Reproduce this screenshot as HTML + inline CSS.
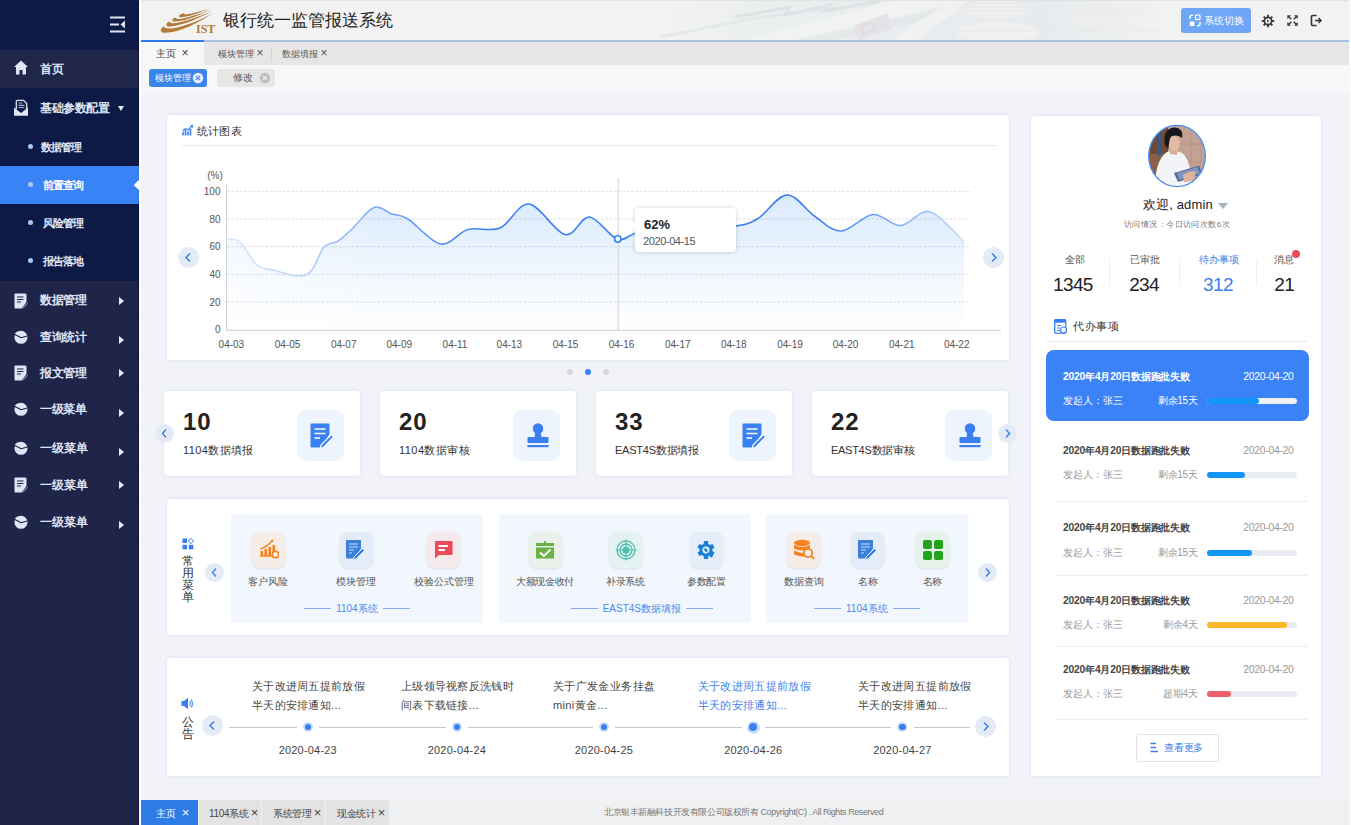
<!DOCTYPE html>
<html><head><meta charset="utf-8">
<style>
*{margin:0;padding:0;box-sizing:border-box}
html,body{width:1351px;height:825px;overflow:hidden;background:#f2f3f8;font-family:"Liberation Sans",sans-serif;color:#333}
.a{position:absolute}
#root{position:relative;width:1351px;height:825px;overflow:hidden;background:#f2f3f8}
/* sidebar */
#side{left:0;top:0;width:139px;height:825px;background:#1f2549}
.si{left:0;width:139px;color:#dfe6f7;font-size:11.5px;font-weight:bold;line-height:16px;white-space:nowrap}
.si .t{position:absolute;left:40px}
.sub .t{left:41px}
.sub .dot{position:absolute;left:28px;width:5px;height:5px;border-radius:50%;background:#a9c8f5}
.sep{left:0;width:139px;height:1px;background:#1a2043}
.arr{position:absolute;left:119px;width:0;height:0;border-top:4px solid transparent;border-bottom:4px solid transparent;border-left:5px solid #e6ecf8}
/* header */
#hdr{left:139px;top:0;width:1212px;height:41px;background:#f2f2f2}
.card{background:#fff;border-radius:4px;box-shadow:0 0 3px 1px rgba(200,215,245,.45)}
.ylab{font-size:10px;color:#555;text-align:right;width:30px;line-height:12px}
.xlab{font-size:10px;color:#555;text-align:center;width:40px;line-height:12px}
.gl .ln{display:inline-block;width:27px;height:1px;background:#80abf3;vertical-align:middle;margin:0 5px 2px}
</style></head><body><div id="root">

<!-- SIDEBAR -->
<div id="side" class="a">
  <div class="a" style="left:0;top:0;width:139px;height:50px;background:#0c1a45"></div>
  <!-- hamburger -->
  <svg class="a" style="left:108px;top:14px" width="20" height="20" viewBox="0 0 20 20">
    <rect x="2" y="2.5" width="15" height="2" fill="#dfe3ee"></rect>
    <rect x="2" y="9.5" width="9" height="2" fill="#dfe3ee"></rect>
    <path d="M17 6.5 L12.5 10.5 L17 14.5 Z" fill="#dfe3ee"></path>
    <rect x="2" y="16.5" width="15" height="2" fill="#dfe3ee"></rect>
  </svg>
  <!-- home -->
  <div class="a" style="left:0;top:50px;width:139px;height:38px;background:#20274b"></div>
  <svg class="a" style="left:14px;top:60px" width="14" height="15" viewBox="0 0 14 15">
    <path d="M7 0.5 L0 7 L2 7 L2 14.5 L5.5 14.5 L5.5 10 L8.5 10 L8.5 14.5 L12 14.5 L12 7 L14 7 Z" fill="#dfe6f7"></path>
  </svg>
  <div class="si a" style="top:61px"><span class="t" style="font-size: 12px; letter-spacing: -0.4px;">首页</span></div>
  <!-- submenu region -->
  <div class="a" style="left:0;top:88px;width:139px;height:193px;background:#0c1a45"></div>
  <svg class="a" style="left:13px;top:99px" width="16" height="18" viewBox="0 0 16 18">
    <path d="M3.3 10 V2.5 Q3.3 1.3 4.5 1.3 H10.5 L13.7 4.5 V10" fill="none" stroke="#dfe6f7" stroke-width="1.3"/>
    <path d="M5.5 4 H9.5 M5.5 6.3 H11.5 M5.5 8.5 H11.5" stroke="#a9b4d6" stroke-width="1.2"/>
    <path d="M1 8.5 L8 14 L15 8.5 V16.8 H1 Z" fill="#dfe6f7"/>
  </svg>
  <div class="si a" style="top:100px"><span class="t" style="font-size: 12px; letter-spacing: -0.44px;">基础参数配置</span></div>
  <div class="a" style="left:118px;top:106px;width:0;height:0;border-left:3.5px solid transparent;border-right:3.5px solid transparent;border-top:5px solid #e6ecf8"></div>
  <div class="si sub a" style="top:139px"><span class="dot" style="top:5px"></span><span class="t" style="font-size: 11px; letter-spacing: -0.87px;">数据管理</span></div>
  <div class="a" style="left:0;top:165.5px;width:139px;height:38.5px;background:#3884f6"></div>
  <div class="a" style="left:134px;top:179.5px;width:0;height:0;border-top:5px solid transparent;border-bottom:5px solid transparent;border-right:5px solid #fff"></div>
  <div class="si sub a" style="top:177px;color:#fff"><span class="dot" style="top:5px"></span><span class="t" style="left: 43px; font-size: 11px; letter-spacing: -1.1px;">前置查询</span></div>
  <div class="sep a" style="top:204px;background:#0c1840"></div>
  <div class="si sub a" style="top:215px"><span class="dot" style="top:5px"></span><span class="t" style="left: 43px; font-size: 11px; letter-spacing: -1.1px;">风险管理</span></div>
  <div class="sep a" style="top:242px;background:#13204c"></div>
  <div class="si sub a" style="top:253px"><span class="dot" style="top:5px"></span><span class="t" style="left: 43px; font-size: 11px; letter-spacing: -1.1px;">报告落地</span></div>
  <!-- lower items -->
  <div class="sep a" style="top:318px"></div>
  <div class="sep a" style="top:353px"></div>
  <div class="sep a" style="top:390px"></div>
  <div class="sep a" style="top:428px"></div>
  <div class="sep a" style="top:465px"></div>
  <div class="sep a" style="top:501px"></div>
  <div class="sep a" style="top:537px"></div>
  <div class="si a" style="top:292px"><span class="t" style="font-size: 12px; letter-spacing: -0.43px;">数据管理</span></div>
  <div class="si a" style="top:329px"><span class="t" style="font-size: 12px; letter-spacing: -0.43px;">查询统计</span></div>
  <div class="si a" style="top:365px"><span class="t" style="font-size: 12px; letter-spacing: -0.43px;">报文管理</span></div>
  <div class="si a" style="top:401px"><span class="t" style="font-size: 12px; letter-spacing: -0.43px;">一级菜单</span></div>
  <div class="si a" style="top:440px"><span class="t">一级菜单</span></div>
  <div class="si a" style="top:477px"><span class="t">一级菜单</span></div>
  <div class="si a" style="top:514px"><span class="t">一级菜单</span></div>
  <div class="arr" style="top:297px"></div>
  <div class="arr" style="top:336px"></div>
  <div class="arr" style="top:369px"></div>
  <div class="arr" style="top:409px"></div>
  <div class="arr" style="top:448px"></div>
  <div class="arr" style="top:481px"></div>
  <div class="arr" style="top:521px"></div>
  <svg class="a" style="left:14px;top:293px" width="14" height="16" viewBox="0 0 14 16"><path d="M1.5 0.5 H11 Q12.5 0.5 12.5 2 V9 L8 15.5 H1.5 Q0.5 15.5 0.5 14.5 V1.5 Q0.5 0.5 1.5 0.5 Z" fill="#dfe6f7"></path><path d="M3 4 H9.5 M3 6.5 H9.5 M3 9 H7" stroke="#1f2549" stroke-width="1.2"></path><path d="M13.5 9.5 L9 14.5 L8 16 L9.5 15.5 L14 10.5 Z" fill="#dfe6f7" stroke="#1f2549" stroke-width="0.8"></path></svg>
<svg class="a" style="left:14px;top:329px" width="14" height="15" viewBox="0 0 14 15"><circle cx="7" cy="8.3" r="6.5" fill="#dfe6f7"/><path d="M7.2 8.8 L0.5 5.3 M7.2 8.8 L14 6.8" stroke="#1f2549" stroke-width="1.1"/><path d="M0.6 4.4 L3.8 2.2 L5.8 6.4 Z" fill="#dfe6f7"/></svg>
<svg class="a" style="left:14px;top:365px" width="14" height="16" viewBox="0 0 14 16"><path d="M1.5 0.5 H11 Q12.5 0.5 12.5 2 V9 L8 15.5 H1.5 Q0.5 15.5 0.5 14.5 V1.5 Q0.5 0.5 1.5 0.5 Z" fill="#dfe6f7"></path><path d="M3 4 H9.5 M3 6.5 H9.5 M3 9 H7" stroke="#1f2549" stroke-width="1.2"></path><path d="M13.5 9.5 L9 14.5 L8 16 L9.5 15.5 L14 10.5 Z" fill="#dfe6f7" stroke="#1f2549" stroke-width="0.8"></path></svg>
<svg class="a" style="left:14px;top:401px" width="14" height="15" viewBox="0 0 14 15"><circle cx="7" cy="8.3" r="6.5" fill="#dfe6f7"/><path d="M7.2 8.8 L0.5 5.3 M7.2 8.8 L14 6.8" stroke="#1f2549" stroke-width="1.1"/><path d="M0.6 4.4 L3.8 2.2 L5.8 6.4 Z" fill="#dfe6f7"/></svg>
<svg class="a" style="left:14px;top:440px" width="14" height="15" viewBox="0 0 14 15"><circle cx="7" cy="8.3" r="6.5" fill="#dfe6f7"/><path d="M7.2 8.8 L0.5 5.3 M7.2 8.8 L14 6.8" stroke="#1f2549" stroke-width="1.1"/><path d="M0.6 4.4 L3.8 2.2 L5.8 6.4 Z" fill="#dfe6f7"/></svg>
<svg class="a" style="left:14px;top:477px" width="14" height="16" viewBox="0 0 14 16"><path d="M1.5 0.5 H11 Q12.5 0.5 12.5 2 V9 L8 15.5 H1.5 Q0.5 15.5 0.5 14.5 V1.5 Q0.5 0.5 1.5 0.5 Z" fill="#dfe6f7"></path><path d="M3 4 H9.5 M3 6.5 H9.5 M3 9 H7" stroke="#1f2549" stroke-width="1.2"></path><path d="M13.5 9.5 L9 14.5 L8 16 L9.5 15.5 L14 10.5 Z" fill="#dfe6f7" stroke="#1f2549" stroke-width="0.8"></path></svg>
<svg class="a" style="left:14px;top:514px" width="14" height="15" viewBox="0 0 14 15"><circle cx="7" cy="8.3" r="6.5" fill="#dfe6f7"/><path d="M7.2 8.8 L0.5 5.3 M7.2 8.8 L14 6.8" stroke="#1f2549" stroke-width="1.1"/><path d="M0.6 4.4 L3.8 2.2 L5.8 6.4 Z" fill="#dfe6f7"/></svg>
</div>

<!-- HEADER -->
<div id="hdr" class="a">
</div>

<div class="a" style="left:139px;top:0;width:1212px;height:1px;background:#e2e2e2"></div>
<!-- faint header watermark -->
<svg class="a" style="left:640px;top:1px" width="540" height="40" viewBox="0 0 540 40">
  <defs>
    <linearGradient id="wmg" x1="0" y1="0" x2="1" y2="0">
      <stop offset="0" stop-color="#f2f2f2" stop-opacity="0"/>
      <stop offset="0.2" stop-color="#e9edee" stop-opacity="0.7"/>
      <stop offset="0.75" stop-color="#e7ebee" stop-opacity="1"/>
      <stop offset="0.92" stop-color="#ecefef" stop-opacity="0.6"/>
      <stop offset="1" stop-color="#f2f2f2" stop-opacity="0"/>
    </linearGradient>
  </defs>
  <rect x="0" y="0" width="540" height="40" fill="url(#wmg)"/>
  <path d="M20 36 L110 18 L150 12 L190 8 L230 4" fill="none" stroke="#e3e8e9" stroke-width="3"/>
  <path d="M95 16 L150 6 L145 14 L190 4 L185 10 L240 0" fill="none" stroke="#dde3e4" stroke-width="3"/>
  <path d="M100 40 L180 40 L320 0 L250 0 Z" fill="#f3f4f4" opacity="0.7"/>
  <path d="M150 40 L260 16 L330 0 L345 0 L270 22 L190 40 Z" fill="#dfe5e6" opacity="0.6"/>
  <rect x="215" y="18" width="36" height="16" rx="2" fill="#e4e4e8" transform="rotate(-20 233 26)"/>
  <rect x="222" y="21" width="12" height="8" fill="none" stroke="#e6d3d6" stroke-width="1" transform="rotate(-20 233 26)"/>
  <path d="M250 40 L310 0 L330 0 L275 40 Z" fill="#f2f3f3" opacity="0.8"/>
  <ellipse cx="356" cy="8" rx="30" ry="10" fill="#efefee"/>
  <path d="M326 2 H386 M326 6 H386 M326 10 H386" stroke="#e5e6e2" stroke-width="0.8"/>
  <ellipse cx="358" cy="31" rx="42" ry="10" fill="#f0f0ef"/>
  <ellipse cx="455" cy="16" rx="28" ry="14" fill="#ebedeb" opacity="0.8"/>
  <path d="M395 0 L380 40 M430 10 L520 10 M300 30 L520 30" stroke="#e2e6e8" stroke-width="0.8" opacity="0.7"/>
</svg>
<!-- logo -->
<svg class="a" style="left:155px;top:5px" width="65" height="33" viewBox="0 0 65 33">
  <g fill="#b47a38">
  <path d="M8.7 21.2 C4.5 24 5 28 10 27.8 C25 27.5 45 17 58.7 7.7 C45 15.5 25 23.5 14 23.5 C11 23.5 9.5 22.5 8.7 21.2 Z"></path>
  <path d="M14 16.4 C10 18.5 10.5 21.8 15 21.5 C28 20.5 45 13 57.3 5.8 C45 11.5 28 17.5 19 18.2 C16.5 18.3 14.8 17.6 14 16.4 Z"></path>
  <path d="M20.2 12.5 C16.5 14 16 16.8 20.5 16.6 C32 16 45 10 55.3 4.6 C45 8.8 32 13.5 24.5 14 C22.5 14.1 20.8 13.5 20.2 12.5 Z"></path>
  <path d="M28.9 8.2 C23.5 9.5 22 12.3 26.5 12.2 C36 11.5 45 7.5 52.9 4.1 C45 6.2 37 9 31 9.5 C30 9.5 29.3 9 28.9 8.2 Z"></path>
  </g>
  <text x="41" y="28.2" font-family="Liberation Serif" font-weight="bold" font-size="12" fill="#b47a38" letter-spacing="0">IST</text>
</svg>
<div class="a" style="left: 223px; top: 11px; font-size: 17px; line-height: 20px; color: rgb(34, 34, 34); white-space: nowrap; letter-spacing: -0.03px;">银行统一监管报送系统</div>
<!-- right buttons -->
<div class="a" style="left:1181px;top:8px;width:70px;height:25px;background:#6fa6f6;border-radius:3px"></div>
<svg class="a" style="left:1189px;top:14px" width="12" height="13" viewBox="0 0 12 13">
  <path d="M1 5 V3 Q1 1.2 3 1.2 H4" fill="none" stroke="#fff" stroke-width="1.4"/>
  <rect x="6.5" y="0.8" width="4.5" height="4.8" rx="1.2" fill="none" stroke="#fff" stroke-width="1.3"/>
  <rect x="0.8" y="7.5" width="4.5" height="4.5" fill="#fff"/>
  <path d="M11 8 V10 Q11 11.8 9 11.8 H8" fill="none" stroke="#fff" stroke-width="1.4"/>
</svg>
<div class="a" style="left: 1204px; top: 14px; font-size: 10px; line-height: 13px; color: rgb(255, 255, 255); white-space: nowrap; letter-spacing: 0px;">系统切换</div>
<svg class="a" style="left:1261px;top:13.5px" width="14" height="14" viewBox="0 0 14 14">
  <path d="M7.00 3.40 L7.00 0.80 M9.55 4.45 L11.38 2.62 M10.60 7.00 L13.20 7.00 M9.55 9.55 L11.38 11.38 M7.00 10.60 L7.00 13.20 M4.45 9.55 L2.62 11.38 M3.40 7.00 L0.80 7.00 M4.45 4.45 L2.62 2.62 " stroke="#3a3a3a" stroke-width="1.9"/>
  <circle cx="7" cy="7" r="3.6" fill="none" stroke="#3a3a3a" stroke-width="1.7"/>
  <path d="M6 5.6 L8.3 7 L6 8.4 Z" fill="#3a3a3a"/>
</svg>
<svg class="a" style="left:1287px;top:15px" width="11" height="11" viewBox="0 0 11 11">
  <path d="M0.3 0.3 H4 L0.3 4 Z M10.7 0.3 H7 L10.7 4 Z M0.3 10.7 H4 L0.3 7 Z M10.7 10.7 H7 L10.7 7 Z" fill="#3a3a3a"/>
  <path d="M1.5 1.5 L4.3 4.3 M9.5 1.5 L6.7 4.3 M1.5 9.5 L4.3 6.7 M9.5 9.5 L6.7 6.7" stroke="#3a3a3a" stroke-width="1.5"/>
</svg>
<svg class="a" style="left:1310px;top:14px" width="13" height="13" viewBox="0 0 13 13">
  <path d="M6.5 1.5 H2.5 Q1.5 1.5 1.5 2.5 V10.5 Q1.5 11.5 2.5 11.5 H6.5" fill="none" stroke="#333" stroke-width="1.6"></path>
  <path d="M5 6.5 H11 M8.5 4 L11 6.5 L8.5 9" fill="none" stroke="#333" stroke-width="1.5"></path>
</svg>
<div class="a" style="left:1349px;top:0;width:2px;height:825px;background:#fbfbfb"></div>



<!-- header bottom line -->
<div class="a" style="left:139px;top:40px;width:1210px;height:2px;background:#a9bfe3"></div>
<div class="a" style="left:139px;top:40px;width:65px;height:2px;background:#2e7cf0"></div>
<div class="a" style="left:139px;top:42px;width:1210px;height:23px;background:#e6e6e6"></div>
<div class="a" style="left:139px;top:42px;width:65px;height:23px;background:#f7f7f7"></div>
<div class="a" style="left:271px;top:47px;width:1px;height:14px;background:#d6d6d6"></div>
<div class="a tabt" style="left:156px;top:47px;font-size:10px;line-height:13px;color:#444;white-space:nowrap">主页&nbsp;&nbsp;<span style="font-size:12px">×</span></div>
<div class="a tabt" style="left:218px;top:47px;font-size:9.3px;line-height:13px;color:#555;white-space:nowrap">模块管理 <span style="font-size:12px">×</span></div>
<div class="a tabt" style="left:282px;top:47px;font-size:9.3px;line-height:13px;color:#555;white-space:nowrap">数据填报 <span style="font-size:12px">×</span></div>
<!-- tag row -->
<div class="a" style="left:139px;top:65px;width:1210px;height:27px;background:#f7f7f7"></div>
<div class="a" style="left:149px;top:69px;width:58px;height:18px;background:#3a86e8;border-radius:3px"></div>
<div class="a" style="left:155px;top:71px;font-size:9px;line-height:14px;color:#fff;white-space:nowrap">模块管理</div>
<svg class="a" style="left:192px;top:72px" width="12" height="12" viewBox="0 0 12 12"><circle cx="6" cy="6" r="5.2" fill="#e7f0fc"></circle><path d="M3.8 3.8 L8.2 8.2 M8.2 3.8 L3.8 8.2" stroke="#3a86e8" stroke-width="1.2"></path></svg>
<div class="a" style="left:217px;top:69px;width:58px;height:18px;background:#e6e6e6;border-radius:3px"></div>
<div class="a" style="left:233px;top:71px;font-size:9.5px;line-height:14px;color:#555;white-space:nowrap">修改</div>
<svg class="a" style="left:259px;top:72px" width="12" height="12" viewBox="0 0 12 12"><circle cx="6" cy="6" r="5.2" fill="#bdbdbd"></circle><path d="M3.8 3.8 L8.2 8.2 M8.2 3.8 L3.8 8.2" stroke="#eee" stroke-width="1.2"></path></svg>



<div class="card a" style="left:167px;top:115px;width:842px;height:245px"></div>
<svg class="a" style="left:182px;top:124px" width="12" height="12" viewBox="0 0 12 12">
  <path d="M1 11.5 V8 M3.5 11.5 V6 M6 11.5 V7.5 M8.5 11.5 V5" stroke="#3a7ff0" stroke-width="1.6"></path>
  <path d="M0.8 7 L3.5 4.5 L6 6 L10 2" fill="none" stroke="#3a7ff0" stroke-width="1.2"></path>
  <path d="M8 1.2 L11.2 0.8 L10.8 4 Z" fill="#3a7ff0"></path>
</svg>
<div class="a" style="left: 197px; top: 124px; font-size: 11px; line-height: 14px; color: rgb(51, 51, 51); white-space: nowrap; letter-spacing: 0.23px;">统计图表</div>
<div class="a" style="left:182px;top:145px;width:814px;height:1px;background:#e8e8e8"></div>
<svg class="a" style="left:167px;top:115px" width="842" height="245" viewBox="167 115 842 245">
  <defs>
    <linearGradient id="lg" gradientUnits="userSpaceOnUse" x1="226" y1="0" x2="964" y2="0">
      <stop offset="0" stop-color="#d9e8fc"/>
      <stop offset="0.1" stop-color="#bcd5f9"/>
      <stop offset="0.2" stop-color="#80b0f6"/>
      <stop offset="0.3" stop-color="#4c8cf3"/>
      <stop offset="0.38" stop-color="#3a80f2"/>
      <stop offset="0.8" stop-color="#3a80f2"/>
      <stop offset="0.9" stop-color="#7aabf5"/>
      <stop offset="1" stop-color="#c6ddfa"/>
    </linearGradient>
    <linearGradient id="ag" gradientUnits="userSpaceOnUse" x1="0" y1="195" x2="0" y2="330">
      <stop offset="0" stop-color="#3b8ff6" stop-opacity="0.19"></stop>
      <stop offset="0.55" stop-color="#3b8ff6" stop-opacity="0.08"></stop>
      <stop offset="1" stop-color="#3b8ff6" stop-opacity="0.0"></stop>
    </linearGradient>
    <linearGradient id="am" gradientUnits="userSpaceOnUse" x1="226" y1="0" x2="964" y2="0">
      <stop offset="0" stop-color="#fff" stop-opacity="0.5"></stop>
      <stop offset="0.2" stop-color="#fff" stop-opacity="1"></stop>
      <stop offset="1" stop-color="#fff" stop-opacity="1"></stop>
    </linearGradient>
    <mask id="amask"><rect x="167" y="115" width="842" height="245" fill="url(#am)"></rect></mask>
  </defs>
  <line x1="227" y1="191.3" x2="971" y2="191.3" stroke="#dedede" stroke-width="1" stroke-dasharray="2.6 1.7"></line><line x1="227" y1="219.0" x2="971" y2="219.0" stroke="#dedede" stroke-width="1" stroke-dasharray="2.6 1.7"></line><line x1="227" y1="246.7" x2="971" y2="246.7" stroke="#dedede" stroke-width="1" stroke-dasharray="2.6 1.7"></line><line x1="227" y1="274.4" x2="971" y2="274.4" stroke="#dedede" stroke-width="1" stroke-dasharray="2.6 1.7"></line><line x1="227" y1="302.1" x2="971" y2="302.1" stroke="#dedede" stroke-width="1" stroke-dasharray="2.6 1.7"></line>
  <path d="M226.0 239.0 C228.3 239.5 234.8 237.7 240.0 242.0 C245.2 246.3 251.2 260.2 257.0 265.0 C262.8 269.8 268.0 268.7 275.0 270.5 C282.0 272.3 292.8 276.1 299.0 276.0 C305.2 275.9 307.8 274.8 312.0 270.0 C316.2 265.2 319.7 251.8 324.0 247.0 C328.3 242.2 333.3 244.0 338.0 241.0 C342.7 238.0 346.0 234.6 352.0 229.0 C358.0 223.4 367.3 210.0 374.0 207.5 C380.7 205.0 386.3 212.1 392.0 214.0 C397.7 215.9 399.9 214.0 408.0 219.0 C416.1 224.0 430.5 242.2 440.5 244.0 C450.5 245.8 458.1 232.2 468.0 229.5 C477.9 226.8 489.8 232.2 500.0 228.0 C510.2 223.8 518.2 202.9 529.0 204.0 C539.8 205.1 554.9 232.3 565.0 234.5 C575.1 236.7 580.7 216.2 589.5 217.0 C598.3 217.8 609.3 236.7 617.7 239.2 C626.1 241.7 628.0 233.7 640.0 232.0 C652.0 230.3 674.0 230.0 690.0 229.0 C706.0 228.0 724.7 227.8 736.0 226.0 C747.3 224.2 749.5 223.7 758.0 218.5 C766.5 213.3 777.5 195.3 787.0 195.0 C796.5 194.7 806.0 210.5 815.0 216.5 C824.0 222.5 831.3 231.3 841.0 231.0 C850.7 230.7 863.0 215.4 873.0 214.5 C883.0 213.6 891.2 226.1 900.7 225.6 C910.2 225.1 919.5 209.0 930.0 211.7 C940.5 214.4 958.3 236.6 964.0 241.6 L964 330 L226 330 Z" fill="url(#ag)" mask="url(#amask)"></path>
  <line x1="226.5" y1="184" x2="226.5" y2="330" stroke="#d0d0d0" stroke-width="1"></line>
  <line x1="226" y1="330.3" x2="1001" y2="330.3" stroke="#cfcfcf" stroke-width="1"></line>
  <line x1="618.2" y1="178" x2="618.2" y2="330" stroke="#d2d2d2" stroke-width="1"></line>
  <path d="M226.0 239.0 C228.3 239.5 234.8 237.7 240.0 242.0 C245.2 246.3 251.2 260.2 257.0 265.0 C262.8 269.8 268.0 268.7 275.0 270.5 C282.0 272.3 292.8 276.1 299.0 276.0 C305.2 275.9 307.8 274.8 312.0 270.0 C316.2 265.2 319.7 251.8 324.0 247.0 C328.3 242.2 333.3 244.0 338.0 241.0 C342.7 238.0 346.0 234.6 352.0 229.0 C358.0 223.4 367.3 210.0 374.0 207.5 C380.7 205.0 386.3 212.1 392.0 214.0 C397.7 215.9 399.9 214.0 408.0 219.0 C416.1 224.0 430.5 242.2 440.5 244.0 C450.5 245.8 458.1 232.2 468.0 229.5 C477.9 226.8 489.8 232.2 500.0 228.0 C510.2 223.8 518.2 202.9 529.0 204.0 C539.8 205.1 554.9 232.3 565.0 234.5 C575.1 236.7 580.7 216.2 589.5 217.0 C598.3 217.8 609.3 236.7 617.7 239.2 C626.1 241.7 628.0 233.7 640.0 232.0 C652.0 230.3 674.0 230.0 690.0 229.0 C706.0 228.0 724.7 227.8 736.0 226.0 C747.3 224.2 749.5 223.7 758.0 218.5 C766.5 213.3 777.5 195.3 787.0 195.0 C796.5 194.7 806.0 210.5 815.0 216.5 C824.0 222.5 831.3 231.3 841.0 231.0 C850.7 230.7 863.0 215.4 873.0 214.5 C883.0 213.6 891.2 226.1 900.7 225.6 C910.2 225.1 919.5 209.0 930.0 211.7 C940.5 214.4 958.3 236.6 964.0 241.6" fill="none" stroke="url(#lg)" stroke-width="1.6"></path>
  <circle cx="617.8" cy="239" r="3.2" fill="#fff" stroke="#3a80f2" stroke-width="1.6"></circle>
  <text x="215" y="179" text-anchor="middle" font-size="10" fill="#555">(%)</text>
  <text x="220.5" y="194.9" text-anchor="end" font-size="10" fill="#555">100</text><text x="220.5" y="222.6" text-anchor="end" font-size="10" fill="#555">80</text><text x="220.5" y="250.3" text-anchor="end" font-size="10" fill="#555">60</text><text x="220.5" y="278.0" text-anchor="end" font-size="10" fill="#555">40</text><text x="220.5" y="305.7" text-anchor="end" font-size="10" fill="#555">20</text><text x="220.5" y="333.4" text-anchor="end" font-size="10" fill="#555">0</text>
  <text x="231.4" y="347.8" text-anchor="middle" font-size="10" fill="#555">04-03</text><text x="287.6" y="347.8" text-anchor="middle" font-size="10" fill="#555">04-05</text><text x="343.7" y="347.8" text-anchor="middle" font-size="10" fill="#555">04-07</text><text x="399.3" y="347.8" text-anchor="middle" font-size="10" fill="#555">04-09</text><text x="455.0" y="347.8" text-anchor="middle" font-size="10" fill="#555">04-11</text><text x="509.4" y="347.8" text-anchor="middle" font-size="10" fill="#555">04-13</text><text x="565.6" y="347.8" text-anchor="middle" font-size="10" fill="#555">04-15</text><text x="621.6" y="347.8" text-anchor="middle" font-size="10" fill="#555">04-16</text><text x="677.8" y="347.8" text-anchor="middle" font-size="10" fill="#555">04-17</text><text x="733.8" y="347.8" text-anchor="middle" font-size="10" fill="#555">04-18</text><text x="790.1" y="347.8" text-anchor="middle" font-size="10" fill="#555">04-19</text><text x="845.6" y="347.8" text-anchor="middle" font-size="10" fill="#555">04-20</text><text x="901.8" y="347.8" text-anchor="middle" font-size="10" fill="#555">04-21</text><text x="956.7" y="347.8" text-anchor="middle" font-size="10" fill="#555">04-22</text>
</svg>
<!-- tooltip -->
<div class="a" style="left:635px;top:208px;width:101px;height:44px;background:#fff;border-radius:4px;box-shadow:0 0 4px rgba(0,0,0,.18)"></div>
<div class="a" style="left:630px;top:221px;width:0;height:0;border-top:5px solid transparent;border-bottom:5px solid transparent;border-right:6px solid #fff"></div>
<div class="a" style="left:644px;top:217px;font-size:13px;line-height:15px;color:#222;font-weight:bold;white-space:nowrap">62%</div>
<div class="a" style="left:643px;top:235px;font-size:11px;line-height:12px;color:#555;white-space:nowrap;letter-spacing:-0.4px">2020-04-15</div>
<!-- arrows -->
<div class="a" style="left:178px;top:247px;width:21px;height:21px;border-radius:50%;background:#e4ebf7"></div>
<svg class="a" style="left:178px;top:247px" width="21" height="21" viewBox="0 0 21 21"><path d="M12 6.5 L8 10.5 L12 14.5" fill="none" stroke="#3a7ff0" stroke-width="1.5"></path></svg>
<div class="a" style="left:983px;top:247px;width:21px;height:21px;border-radius:50%;background:#e4ebf7"></div>
<svg class="a" style="left:983px;top:247px" width="21" height="21" viewBox="0 0 21 21"><path d="M9 6.5 L13 10.5 L9 14.5" fill="none" stroke="#3a7ff0" stroke-width="1.5"></path></svg>
<!-- pager dots -->
<div class="a" style="left:567px;top:369px;width:6px;height:6px;border-radius:50%;background:#d8d8d8"></div>
<div class="a" style="left:585px;top:369px;width:6px;height:6px;border-radius:50%;background:#3a80f2"></div>
<div class="a" style="left:603px;top:369px;width:6px;height:6px;border-radius:50%;background:#d8d8d8"></div>
<div class="card a" style="left:164px;top:391px;width:196px;height:85px"></div>
<div class="a num" style="left:183px;top:409px;font-size:24px;line-height:26px;font-weight:bold;color:#222;letter-spacing:1px">10</div>
<div class="a" style="left: 183px; top: 443px; font-size: 11px; line-height: 14px; color: rgb(51, 51, 51); white-space: nowrap; letter-spacing: 0.39px;">1104数据填报</div>
<div class="a" style="left:297px;top:410px;width:47px;height:51px;border-radius:9px;background:#edf4fe"></div>
<svg class="a" style="left:310px;top:423px" width="24" height="26" viewBox="0 0 24 26"><path d="M1.5 0.5 H18.5 Q19.5 0.5 19.5 1.5 V11 L11 24.5 H1.5 Q0.5 24.5 0.5 23.5 V1.5 Q0.5 0.5 1.5 0.5 Z" fill="#3a80f2"></path><path d="M4.5 6 H15.5 M4.5 10.5 H15.5 M4.5 15 H10" stroke="#fff" stroke-width="1.6"></path><path d="M21.5 11.5 L23.8 13.8 L13.5 24.5 L10.2 25.4 L11 22 Z" fill="#3a80f2" stroke="#fff" stroke-width="1.2"></path></svg>
<div class="card a" style="left:380px;top:391px;width:196px;height:85px"></div>
<div class="a num" style="left:399px;top:409px;font-size:24px;line-height:26px;font-weight:bold;color:#222;letter-spacing:1px">20</div>
<div class="a" style="left: 399px; top: 443px; font-size: 11px; line-height: 14px; color: rgb(51, 51, 51); white-space: nowrap; letter-spacing: 0.46px;">1104数据审核</div>
<div class="a" style="left:513px;top:410px;width:47px;height:51px;border-radius:9px;background:#edf4fe"></div>
<svg class="a" style="left:526px;top:423px" width="24" height="26" viewBox="0 0 24 26"><circle cx="12" cy="5.5" r="5.3" fill="#3a80f2"></circle><path d="M9.2 9 L8.6 14 H15.4 L14.8 9 Z" fill="#3a80f2"></path><rect x="1.5" y="14" width="21" height="6" rx="1" fill="#3a80f2"></rect><rect x="1.5" y="22" width="21" height="2.2" fill="#3a80f2"></rect></svg>
<div class="card a" style="left:596px;top:391px;width:196px;height:85px"></div>
<div class="a num" style="left:615px;top:409px;font-size:24px;line-height:26px;font-weight:bold;color:#222;letter-spacing:1px">33</div>
<div class="a" style="left: 615px; top: 443px; font-size: 11px; line-height: 14px; color: rgb(51, 51, 51); white-space: nowrap; letter-spacing: -0.23px;">EAST4S数据填报</div>
<div class="a" style="left:729px;top:410px;width:47px;height:51px;border-radius:9px;background:#edf4fe"></div>
<svg class="a" style="left:742px;top:423px" width="24" height="26" viewBox="0 0 24 26"><path d="M1.5 0.5 H18.5 Q19.5 0.5 19.5 1.5 V11 L11 24.5 H1.5 Q0.5 24.5 0.5 23.5 V1.5 Q0.5 0.5 1.5 0.5 Z" fill="#3a80f2"></path><path d="M4.5 6 H15.5 M4.5 10.5 H15.5 M4.5 15 H10" stroke="#fff" stroke-width="1.6"></path><path d="M21.5 11.5 L23.8 13.8 L13.5 24.5 L10.2 25.4 L11 22 Z" fill="#3a80f2" stroke="#fff" stroke-width="1.2"></path></svg>
<div class="card a" style="left:812px;top:391px;width:196px;height:85px"></div>
<div class="a num" style="left:831px;top:409px;font-size:24px;line-height:26px;font-weight:bold;color:#222;letter-spacing:1px">22</div>
<div class="a" style="left: 831px; top: 443px; font-size: 11px; line-height: 14px; color: rgb(51, 51, 51); white-space: nowrap; letter-spacing: -0.28px;">EAST4S数据审核</div>
<div class="a" style="left:945px;top:410px;width:47px;height:51px;border-radius:9px;background:#edf4fe"></div>
<svg class="a" style="left:958px;top:423px" width="24" height="26" viewBox="0 0 24 26"><circle cx="12" cy="5.5" r="5.3" fill="#3a80f2"></circle><path d="M9.2 9 L8.6 14 H15.4 L14.8 9 Z" fill="#3a80f2"></path><rect x="1.5" y="14" width="21" height="6" rx="1" fill="#3a80f2"></rect><rect x="1.5" y="22" width="21" height="2.2" fill="#3a80f2"></rect></svg>
<div class="a" style="left:155px;top:424px;width:19px;height:19px;border-radius:50%;background:#e4ebf7"></div>
<svg class="a" style="left:155px;top:424px" width="19" height="19" viewBox="0 0 19 19"><path d="M11 5.5 L7.5 9.5 L11 13.5" fill="none" stroke="#3a7ff0" stroke-width="1.4"></path></svg>
<div class="a" style="left:998px;top:424px;width:19px;height:19px;border-radius:50%;background:#e4ebf7"></div>
<svg class="a" style="left:998px;top:424px" width="19" height="19" viewBox="0 0 19 19"><path d="M8 5.5 L11.5 9.5 L8 13.5" fill="none" stroke="#3a7ff0" stroke-width="1.4"></path></svg>
<div class="card a" style="left:167px;top:499px;width:842px;height:136px"></div>
<svg class="a" style="left:182px;top:538px" width="12" height="12" viewBox="0 0 12 12">
  <rect x="0.5" y="0.5" width="4.5" height="4.5" fill="#3a7ff0"></rect>
  <path d="M9 0.3 L11.7 3 L9 5.7 L6.3 3 Z" fill="none" stroke="#3a7ff0" stroke-width="1"></path>
  <rect x="0.5" y="6.8" width="4.5" height="4.5" fill="#3a7ff0"></rect>
  <rect x="6.8" y="6.8" width="4.5" height="4.5" fill="#3a7ff0"></rect>
</svg>
<div class="a" style="left:181px;top:555px;width:14px;font-size:12px;line-height:12px;color:#333;text-align:center;word-break:break-all">常用菜单</div>
<div class="a" style="left:204.5px;top:563px;width:19px;height:19px;border-radius:50%;background:#e4ebf7"></div>
<svg class="a" style="left:204.5px;top:563px" width="19" height="19" viewBox="0 0 19 19"><path d="M11 5.5 L7.5 9.5 L11 13.5" fill="none" stroke="#3a7ff0" stroke-width="1.4"></path></svg>
<div class="a" style="left:978px;top:563px;width:19px;height:19px;border-radius:50%;background:#e4ebf7"></div>
<svg class="a" style="left:978px;top:563px" width="19" height="19" viewBox="0 0 19 19"><path d="M8 5.5 L11.5 9.5 L8 13.5" fill="none" stroke="#3a7ff0" stroke-width="1.4"></path></svg>
<div class="a" style="left:231px;top:514px;width:252.0px;height:109px;background:#f2f7fd;border-radius:3px"></div>
<div class="a gl" style="left:296.9px;top:602px;width:120px;font-size:10px;line-height:14px;color:#4a8af0;text-align:center;white-space:nowrap"><span class="ln"></span>1104系统<span class="ln"></span></div>
<div class="a" style="left:498.6px;top:514px;width:252.4px;height:109px;background:#f2f7fd;border-radius:3px"></div>
<div class="a gl" style="left:565.7px;top:602px;width:120px;font-size:10px;line-height:14px;color:#4a8af0;text-align:center;white-space:nowrap"><span class="ln"></span>EAST4S数据填报<span class="ln"></span></div>
<div class="a" style="left:766px;top:514px;width:202.0px;height:109px;background:#f2f7fd;border-radius:3px"></div>
<div class="a gl" style="left:806.8px;top:602px;width:120px;font-size:10px;line-height:14px;color:#4a8af0;text-align:center;white-space:nowrap"><span class="ln"></span>1104系统<span class="ln"></span></div>
<div class="a" style="left:251.5px;top:532px;width:33px;height:36px;border-radius:8px;background:#f6ede8;box-shadow:0 1px 3px rgba(0,0,0,.10)"></div>
<svg class="a" style="left:257.0px;top:539px" width="22" height="22" viewBox="0 0 22 22"><path d="M3 17 H21" stroke="#f58220" stroke-width="1.5"></path><rect x="3.5" y="12" width="2.6" height="5" fill="#f58220"></rect><rect x="7.5" y="10" width="2.6" height="7" fill="#f58220"></rect><rect x="11.5" y="8" width="2.6" height="9" fill="#f58220"></rect><rect x="15.5" y="6" width="2.6" height="8" fill="#f58220"></rect><path d="M3 10 Q10 8 15 2" fill="none" stroke="#f58220" stroke-width="1.2"></path><path d="M13.5 1.5 L16.5 0.5 L16 3.5 Z" fill="#f58220"></path><circle cx="18.5" cy="15.5" r="3.2" fill="#fff" stroke="#f58220" stroke-width="1.8"></circle></svg>
<div class="a" style="left: 228px; top: 575px; width: 80px; text-align: center; font-size: 10px; line-height: 14px; color: rgb(85, 85, 85); white-space: nowrap; letter-spacing: 0.07px;">客户风险</div>
<div class="a" style="left:339.8px;top:532px;width:33px;height:36px;border-radius:8px;background:#e3edf9;box-shadow:0 1px 3px rgba(0,0,0,.10)"></div>
<svg class="a" style="left:345.3px;top:539px" width="22" height="22" viewBox="0 0 22 22"><path d="M2 1 H15 Q16 1 16 2 V9.5 L9.5 19.5 H2 Q1 19.5 1 18.5 V2 Q1 1 2 1 Z" fill="#3d7fd9"></path><path d="M4 5 H13 M4 8 H13 M4 11 H9 M4 14 H7" stroke="#cfe0f7" stroke-width="1.1"></path><path d="M17.5 9.5 L19.5 11.5 L11 20 L8.3 20.8 L9 18 Z" fill="#3d7fd9" stroke="#e3edf9" stroke-width="1"></path></svg>
<div class="a" style="left: 316.3px; top: 575px; width: 80px; text-align: center; font-size: 10px; line-height: 14px; color: rgb(85, 85, 85); white-space: nowrap; letter-spacing: 0.03px;">模块管理</div>
<div class="a" style="left:427.3px;top:532px;width:33px;height:36px;border-radius:8px;background:#f5e9ec;box-shadow:0 1px 3px rgba(0,0,0,.10)"></div>
<svg class="a" style="left:432.8px;top:539px" width="22" height="22" viewBox="0 0 22 22"><path d="M1.5 2 H18.5 Q19.5 2 19.5 3 V15 Q19.5 16 18.5 16 H6 L2 19.5 V3 Q1.5 2 2.5 2 Z" fill="#ef4a5a"></path><path d="M5.5 7 H15 M5.5 11 H12" stroke="#fff" stroke-width="1.8"></path></svg>
<div class="a" style="left: 403.8px; top: 575px; width: 80px; text-align: center; font-size: 10px; line-height: 14px; color: rgb(85, 85, 85); white-space: nowrap; letter-spacing: -0.06px;">校验公式管理</div>
<div class="a" style="left:528.5px;top:532px;width:33px;height:36px;border-radius:8px;background:#e9f1ea;box-shadow:0 1px 3px rgba(0,0,0,.10)"></div>
<svg class="a" style="left:534.0px;top:539px" width="22" height="22" viewBox="0 0 22 22"><rect x="2" y="4" width="18" height="3" fill="#6ab245"></rect><rect x="2" y="8.5" width="18" height="11" fill="#6ab245"></rect><rect x="10" y="2" width="2" height="2.5" fill="#6ab245"></rect><path d="M6 13.5 L10 17 L16.5 10.5" fill="none" stroke="#fff" stroke-width="2"></path></svg>
<div class="a" style="left: 505px; top: 575px; width: 80px; text-align: center; font-size: 10px; line-height: 14px; color: rgb(85, 85, 85); white-space: nowrap; letter-spacing: -0.26px;">大额现金收付</div>
<div class="a" style="left:609.0px;top:532px;width:33px;height:36px;border-radius:8px;background:#e5f2f2;box-shadow:0 1px 3px rgba(0,0,0,.10)"></div>
<svg class="a" style="left:614.5px;top:539px" width="22" height="22" viewBox="0 0 22 22"><circle cx="11" cy="11" r="9" fill="none" stroke="#4fbfae" stroke-width="1.3"></circle><circle cx="11" cy="11" r="6" fill="none" stroke="#4fbfae" stroke-width="1.3"></circle><circle cx="11" cy="11" r="3.6" fill="#4fbfae"></circle><path d="M11 0.5 V21.5 M0.5 11 H21.5" stroke="#4fbfae" stroke-width="1.1"></path></svg>
<div class="a" style="left: 585.5px; top: 575px; width: 80px; text-align: center; font-size: 10px; line-height: 14px; color: rgb(85, 85, 85); white-space: nowrap; letter-spacing: -0.13px;">补录系统</div>
<div class="a" style="left:689.8px;top:532px;width:33px;height:36px;border-radius:8px;background:#e3eef9;box-shadow:0 1px 3px rgba(0,0,0,.10)"></div>
<svg class="a" style="left:695.3px;top:539px" width="22" height="22" viewBox="0 0 22 22"><path fill="#1a7fd8" d="M19.4 13a7.5 7.5 0 0 0 0-2l2.1-1.6-2-3.5-2.5 1a7.6 7.6 0 0 0-1.7-1L15 3h-4l-.4 2.9a7.6 7.6 0 0 0-1.7 1l-2.5-1-2 3.5L6.6 11a7.5 7.5 0 0 0 0 2l-2.1 1.6 2 3.5 2.5-1a7.6 7.6 0 0 0 1.7 1L11 21h4l.4-2.9a7.6 7.6 0 0 0 1.7-1l2.5 1 2-3.5zM13 15.5a3.5 3.5 0 1 1 0-7 3.5 3.5 0 0 1 0 7z" transform="translate(-2 -1)"></path><path d="M9 9 L17 18" stroke="#1a7fd8" stroke-width="2.5"></path><circle cx="11" cy="11" r="2.6" fill="none" stroke="#e3eef9" stroke-width="1.2"></circle></svg>
<div class="a" style="left: 666.3px; top: 575px; width: 80px; text-align: center; font-size: 10px; line-height: 14px; color: rgb(85, 85, 85); white-space: nowrap; letter-spacing: -0.33px;">参数配置</div>
<div class="a" style="left:787.1px;top:532px;width:33px;height:36px;border-radius:8px;background:#f6ede8;box-shadow:0 1px 3px rgba(0,0,0,.10)"></div>
<svg class="a" style="left:792.6px;top:539px" width="22" height="22" viewBox="0 0 22 22"><ellipse cx="9" cy="4" rx="8" ry="3.2" fill="#f58220"></ellipse><path d="M1 6 Q9 10 17 6 V9.5 Q9 13.5 1 9.5 Z" fill="#f58220"></path><path d="M1 11.5 Q9 15.5 13 13 L13 17 Q9 18.5 1 15.5 Z" fill="#f58220"></path><circle cx="15" cy="14" r="4.2" fill="#f6ede8" stroke="#f58220" stroke-width="1.8"></circle><path d="M18 17 L21 20" stroke="#f58220" stroke-width="2"></path></svg>
<div class="a" style="left: 763.6px; top: 575px; width: 80px; text-align: center; font-size: 10px; line-height: 14px; color: rgb(85, 85, 85); white-space: nowrap; letter-spacing: 0px;">数据查询</div>
<div class="a" style="left:851.3px;top:532px;width:33px;height:36px;border-radius:8px;background:#e3edf9;box-shadow:0 1px 3px rgba(0,0,0,.10)"></div>
<svg class="a" style="left:856.8px;top:539px" width="22" height="22" viewBox="0 0 22 22"><path d="M2 1 H15 Q16 1 16 2 V9.5 L9.5 19.5 H2 Q1 19.5 1 18.5 V2 Q1 1 2 1 Z" fill="#3d7fd9"></path><path d="M4 5 H13 M4 8 H13 M4 11 H9 M4 14 H7" stroke="#cfe0f7" stroke-width="1.1"></path><path d="M17.5 9.5 L19.5 11.5 L11 20 L8.3 20.8 L9 18 Z" fill="#3d7fd9" stroke="#e3edf9" stroke-width="1"></path></svg>
<div class="a" style="left: 827.8px; top: 575px; width: 80px; text-align: center; font-size: 10px; line-height: 14px; color: rgb(85, 85, 85); white-space: nowrap; letter-spacing: -0.2px;">名称</div>
<div class="a" style="left:916.0px;top:532px;width:33px;height:36px;border-radius:8px;background:#e5f2e9;box-shadow:0 1px 3px rgba(0,0,0,.10)"></div>
<svg class="a" style="left:921.5px;top:539px" width="22" height="22" viewBox="0 0 22 22"><rect x="1" y="1" width="9" height="9" rx="2" fill="#22a41a"></rect><rect x="12" y="1" width="9" height="9" rx="2" fill="#22a41a"></rect><rect x="1" y="12" width="9" height="9" rx="2" fill="#22a41a"></rect><rect x="12" y="12" width="9" height="9" rx="2" fill="#22a41a"></rect></svg>
<div class="a" style="left: 892.5px; top: 575px; width: 80px; text-align: center; font-size: 10px; line-height: 14px; color: rgb(85, 85, 85); white-space: nowrap; letter-spacing: -0.3px;">名称</div>
<div class="card a" style="left:167px;top:658px;width:842px;height:118px"></div>
<svg class="a" style="left:181px;top:697px" width="13" height="13" viewBox="0 0 13 13">
  <path d="M0.5 4 H3 L7 0.8 V12.2 L3 9 H0.5 Z" fill="#3a7ff0"></path>
  <path d="M8.8 4 Q10 6.5 8.8 9" fill="none" stroke="#3a7ff0" stroke-width="1.1"></path>
  <path d="M10.3 2.5 Q12.5 6.5 10.3 10.5" fill="none" stroke="#3a7ff0" stroke-width="1.1"></path>
</svg>
<div class="a" style="left:181px;top:716px;width:14px;font-size:12px;line-height:12px;color:#333;text-align:center;word-break:break-all">公告</div>
<div class="a" style="left:202px;top:714.5px;width:21px;height:21px;border-radius:50%;background:#e4ebf7"></div>
<svg class="a" style="left:202px;top:714.5px" width="21" height="21" viewBox="0 0 21 21"><path d="M12 6.5 L8 10.5 L12 14.5" fill="none" stroke="#3a7ff0" stroke-width="1.5"></path></svg>
<div class="a" style="left:975px;top:716px;width:21px;height:21px;border-radius:50%;background:#e4ebf7"></div>
<svg class="a" style="left:975px;top:716px" width="21" height="21" viewBox="0 0 21 21"><path d="M9 6.5 L13 10.5 L9 14.5" fill="none" stroke="#3a7ff0" stroke-width="1.5"></path></svg>
<div class="a" style="left:229.3px;top:726.5px;width:67.7px;height:1px;background:#c8c8c8"></div>
<div class="a" style="left:319.3px;top:726.5px;width:126.6px;height:1px;background:#c8c8c8"></div>
<div class="a" style="left:468.4px;top:726.5px;width:124.5px;height:1px;background:#c8c8c8"></div>
<div class="a" style="left:615.4px;top:726.5px;width:126.9px;height:1px;background:#c8c8c8"></div>
<div class="a" style="left:764.8px;top:726.5px;width:126.6px;height:1px;background:#c8c8c8"></div>
<div class="a" style="left:913.9px;top:726.5px;width:55.8px;height:1px;background:#c8c8c8"></div>
<div class="a" style="left:302.8px;top:722.0px;width:10px;height:10px;border-radius:50%;background:#c9ddfb"></div>
<div class="a" style="left:304.6px;top:723.8px;width:6.4px;height:6.4px;border-radius:50%;background:#3a7ff0"></div>
<div class="a" style="left: 252px; top: 677px; font-size: 11px; line-height: 18.5px; color: rgb(68, 68, 68); white-space: nowrap; letter-spacing: 0.3px;">关于改进周五提前放假<br>半天的安排通知...</div>
<div class="a" style="left: 267.8px; top: 743px; width: 80px; text-align: center; font-size: 11px; line-height: 14px; color: rgb(68, 68, 68); white-space: nowrap; letter-spacing: 0.2px;">2020-04-23</div>
<div class="a" style="left:451.9px;top:722.0px;width:10px;height:10px;border-radius:50%;background:#c9ddfb"></div>
<div class="a" style="left:453.7px;top:723.8px;width:6.4px;height:6.4px;border-radius:50%;background:#3a7ff0"></div>
<div class="a" style="left: 401px; top: 677px; font-size: 11px; line-height: 18.5px; color: rgb(68, 68, 68); white-space: nowrap; letter-spacing: 0.3px;">上级领导视察反洗钱时<br>间表下载链接...</div>
<div class="a" style="left: 416.9px; top: 743px; width: 80px; text-align: center; font-size: 11px; line-height: 14px; color: rgb(68, 68, 68); white-space: nowrap; letter-spacing: 0.22px;">2020-04-24</div>
<div class="a" style="left:598.9px;top:722.0px;width:10px;height:10px;border-radius:50%;background:#c9ddfb"></div>
<div class="a" style="left:600.7px;top:723.8px;width:6.4px;height:6.4px;border-radius:50%;background:#3a7ff0"></div>
<div class="a" style="left: 553px; top: 677px; font-size: 11px; line-height: 18.5px; color: rgb(68, 68, 68); white-space: nowrap; letter-spacing: 0.36px;">关于广发金业务挂盘<br>mini黄金...</div>
<div class="a" style="left: 563.9px; top: 743px; width: 80px; text-align: center; font-size: 11px; line-height: 14px; color: rgb(68, 68, 68); white-space: nowrap; letter-spacing: 0.2px;">2020-04-25</div>
<div class="a" style="left:746.8px;top:720.5px;width:13.0px;height:13.0px;border-radius:50%;background:#c9ddfb"></div>
<div class="a" style="left:749.3px;top:723.0px;width:8px;height:8px;border-radius:50%;background:#3a7ff0"></div>
<div class="a" style="left: 697.5px; top: 677px; font-size: 11px; line-height: 18.5px; color: rgb(58, 127, 240); white-space: nowrap; letter-spacing: 0.34px;">关于改进周五提前放假<br>半天的安排通知...</div>
<div class="a" style="left: 713.3px; top: 743px; width: 80px; text-align: center; font-size: 11px; line-height: 14px; color: rgb(68, 68, 68); white-space: nowrap; letter-spacing: 0.2px;">2020-04-26</div>
<div class="a" style="left:897.4px;top:722.0px;width:10px;height:10px;border-radius:50%;background:#c9ddfb"></div>
<div class="a" style="left:899.2px;top:723.8px;width:6.4px;height:6.4px;border-radius:50%;background:#3a7ff0"></div>
<div class="a" style="left: 858px; top: 677px; font-size: 11px; line-height: 18.5px; color: rgb(68, 68, 68); white-space: nowrap; letter-spacing: 0.37px;">关于改进周五提前放假<br>半天的安排通知...</div>
<div class="a" style="left: 862.4px; top: 743px; width: 80px; text-align: center; font-size: 11px; line-height: 14px; color: rgb(68, 68, 68); white-space: nowrap; letter-spacing: 0.21px;">2020-04-27</div>

<!--MAIN-->

<div class="card a" style="left:1031px;top:115.5px;width:290px;height:660px"></div>
<!-- avatar -->
<svg class="a" style="left:1147px;top:124px" width="60" height="64" viewBox="0 0 60 64">
  <defs><clipPath id="avc"><ellipse cx="30" cy="32" rx="28" ry="30.3"></ellipse></clipPath></defs>
  <g clip-path="url(#avc)">
    <rect x="0" y="0" width="60" height="64" fill="#c4a293"/>
    <path d="M0 0 H21 V64 H0 Z" fill="#6f4a36"/>
    <path d="M0 30 H21 V64 H0 Z" fill="#8a6048"/>
    <rect x="11" y="6" width="2.5" height="26" fill="#2f5c9c"/>
    <path d="M44 0 V40 M54 0 V40 M33 20 H60 M33 38 H60" stroke="#b48d7d" stroke-width="0.8"/>
    <path d="M8 64 Q8 36 20 28 L27 26 L35 29 Q44 35 45 64 Z" fill="#f3f4f7"/>
    <path d="M23 23 L23 30 L30 31 L31 23 Z" fill="#d9ab96"/>
    <ellipse cx="27" cy="19.5" rx="6" ry="7.5" fill="#e4bba7"/>
    <path d="M18 21 Q15 5 27 3.5 Q37 4 35 14 Q30 10 24 12.5 Q22 16 21.5 25 Z" fill="#18181d"/>
    <path d="M27 49 L52 41.5 L55.5 50 L31 58 Z" fill="#56689a"/>
    <path d="M29.5 49 L50.5 43 L53 49.5 L32.5 56 Z" fill="#8393bf"/>
    <path d="M36 51 Q42 46 49 47.5 L47 55 Q42 59 37 58 Z" fill="#e0b49c"/>
  </g>
  <ellipse cx="30" cy="32" rx="28.3" ry="30.6" fill="none" stroke="#4a8af0" stroke-width="1.4"></ellipse>
</svg>
<div class="a" style="left: 1143px; top: 196px; font-size: 13px; line-height: 17px; color: rgb(34, 34, 34); white-space: nowrap; letter-spacing: 0.13px;">欢迎, admin</div>
<div class="a" style="left:1218px;top:203px;width:0;height:0;border-left:5px solid transparent;border-right:5px solid transparent;border-top:6px solid #a8b2be"></div>
<div class="a" style="left: 1077px; top: 219px; width: 200px; text-align: center; font-size: 8px; line-height: 12px; color: rgb(119, 119, 119); white-space: nowrap; letter-spacing: 0.45px;">访问情况：今日访问次数6次</div>
<!-- stats -->
<div class="a" style="left: 1035px; top: 253px; width: 80px; text-align: center; font-size: 10px; line-height: 13px; color: rgb(85, 85, 85); letter-spacing: -0.4px;">全部</div>
<div class="a" style="left: 1105px; top: 253px; width: 80px; text-align: center; font-size: 10px; line-height: 13px; color: rgb(85, 85, 85); letter-spacing: -0.2px;">已审批</div>
<div class="a" style="left: 1178.6px; top: 253px; width: 80px; text-align: center; font-size: 10px; line-height: 13px; color: rgb(58, 127, 240); letter-spacing: -0.07px;">待办事项</div>
<div class="a" style="left: 1243.8px; top: 253px; width: 80px; text-align: center; font-size: 10px; line-height: 13px; color: rgb(85, 85, 85); letter-spacing: 0.1px;">消息</div>
<div class="a" style="left:1292px;top:249.5px;width:8px;height:8px;border-radius:50%;background:#ef4a5a"></div>
<div class="a st" style="left:1032.9px;top:274px;width:80px;text-align:center;font-size:19px;line-height:21px;color:#222;letter-spacing:-0.6px">1345</div>
<div class="a st" style="left:1104.1px;top:274px;width:80px;text-align:center;font-size:19px;line-height:21px;color:#222;letter-spacing:-0.6px">234</div>
<div class="a st" style="left:1178px;top:274px;width:80px;text-align:center;font-size:19px;line-height:21px;color:#3a7ff0;letter-spacing:-0.6px">312</div>
<div class="a st" style="left:1244.2px;top:274px;width:80px;text-align:center;font-size:19px;line-height:21px;color:#222;letter-spacing:-0.6px">21</div>
<div class="a" style="left:1109px;top:260px;width:1px;height:25px;background:#f0f0f0"></div>
<div class="a" style="left:1179px;top:260px;width:1px;height:25px;background:#f0f0f0"></div>
<div class="a" style="left:1256px;top:260px;width:1px;height:25px;background:#f0f0f0"></div>
<!-- todo header -->
<svg class="a" style="left:1054px;top:319px" width="13" height="15" viewBox="0 0 13 15">
  <rect x="0.7" y="0.7" width="11" height="13.5" rx="1" fill="none" stroke="#3a7ff0" stroke-width="1.3"></rect>
  <rect x="0.7" y="0.7" width="11" height="3" fill="#3a7ff0"></rect>
  <path d="M3 6.5 H7 M3 9 H6 M3 11.5 H6" stroke="#3a7ff0" stroke-width="1"></path>
  <circle cx="9.5" cy="11" r="3" fill="#fff" stroke="#3a7ff0" stroke-width="1.2"></circle>
</svg>
<div class="a" style="left: 1073px; top: 319px; font-size: 11px; line-height: 14px; color: rgb(51, 51, 51); white-space: nowrap; letter-spacing: 0.53px;">代办事项</div>
<div class="a" style="left:1046px;top:341px;width:261px;height:1px;background:#e8e8e8"></div>
<!-- blue card -->
<div class="a" style="left:1046px;top:350px;width:262.5px;height:71px;border-radius:8px;background:#3b82f7"></div>
<div class="a" style="left:1063px;top:370.0px;font-size:10.3px;line-height:14px;font-weight:bold;color:#fff;white-space:nowrap;letter-spacing:-0.2px">2020年4月20日数据跑批失败</div>
<div class="a" style="left:1213px;top:370.0px;width:80.5px;text-align:right;font-size:10.4px;line-height:14px;color:#fff;white-space:nowrap;letter-spacing:-0.3px">2020-04-20</div>
<div class="a" style="left:1063px;top:394.0px;font-size:9.7px;line-height:14px;color:#fff;white-space:nowrap">发起人：张三</div>
<div class="a" style="left:1117.5px;top:394.0px;width:80px;text-align:right;font-size:10px;line-height:14px;color:#fff;white-space:nowrap;letter-spacing:-0.3px">剩余15天</div>
<div class="a" style="left:1206.5px;top:398.0px;width:90px;height:6px;border-radius:3px;background:#eef1f5"></div>
<div class="a" style="left:1206.5px;top:398.0px;width:52.1px;height:6px;border-radius:3px;background:#1296f5"></div>
<div class="a" style="left:1063px;top:443.6px;font-size:10.3px;line-height:14px;font-weight:bold;color:#454545;white-space:nowrap;letter-spacing:-0.2px">2020年4月20日数据跑批失败</div>
<div class="a" style="left:1213px;top:443.6px;width:80.5px;text-align:right;font-size:10.4px;line-height:14px;color:#999;white-space:nowrap;letter-spacing:-0.3px">2020-04-20</div>
<div class="a" style="left:1063px;top:468.3px;font-size:9.7px;line-height:14px;color:#999;white-space:nowrap">发起人：张三</div>
<div class="a" style="left:1117.5px;top:468.3px;width:80px;text-align:right;font-size:10px;line-height:14px;color:#999;white-space:nowrap;letter-spacing:-0.3px">剩余15天</div>
<div class="a" style="left:1206.5px;top:472.3px;width:90px;height:6px;border-radius:3px;background:#e8ebf2"></div>
<div class="a" style="left:1206.5px;top:472.3px;width:38.7px;height:6px;border-radius:3px;background:#1296f5"></div>
<div class="a" style="left:1063px;top:521.2px;font-size:10.3px;line-height:14px;font-weight:bold;color:#454545;white-space:nowrap;letter-spacing:-0.2px">2020年4月20日数据跑批失败</div>
<div class="a" style="left:1213px;top:521.2px;width:80.5px;text-align:right;font-size:10.4px;line-height:14px;color:#999;white-space:nowrap;letter-spacing:-0.3px">2020-04-20</div>
<div class="a" style="left:1063px;top:546.1px;font-size:9.7px;line-height:14px;color:#999;white-space:nowrap">发起人：张三</div>
<div class="a" style="left:1117.5px;top:546.1px;width:80px;text-align:right;font-size:10px;line-height:14px;color:#999;white-space:nowrap;letter-spacing:-0.3px">剩余15天</div>
<div class="a" style="left:1206.5px;top:550.1px;width:90px;height:6px;border-radius:3px;background:#e8ebf2"></div>
<div class="a" style="left:1206.5px;top:550.1px;width:45.3px;height:6px;border-radius:3px;background:#1296f5"></div>
<div class="a" style="left:1063px;top:594.2px;font-size:10.3px;line-height:14px;font-weight:bold;color:#454545;white-space:nowrap;letter-spacing:-0.2px">2020年4月20日数据跑批失败</div>
<div class="a" style="left:1213px;top:594.2px;width:80.5px;text-align:right;font-size:10.4px;line-height:14px;color:#999;white-space:nowrap;letter-spacing:-0.3px">2020-04-20</div>
<div class="a" style="left:1063px;top:618.3px;font-size:9.7px;line-height:14px;color:#999;white-space:nowrap">发起人：张三</div>
<div class="a" style="left:1117.5px;top:618.3px;width:80px;text-align:right;font-size:10px;line-height:14px;color:#999;white-space:nowrap;letter-spacing:-0.3px">剩余4天</div>
<div class="a" style="left:1206.5px;top:622.3px;width:90px;height:6px;border-radius:3px;background:#e8ebf2"></div>
<div class="a" style="left:1206.5px;top:622.3px;width:80.9px;height:6px;border-radius:3px;background:#fbb829"></div>
<div class="a" style="left:1063px;top:663.0px;font-size:10.3px;line-height:14px;font-weight:bold;color:#454545;white-space:nowrap;letter-spacing:-0.2px">2020年4月20日数据跑批失败</div>
<div class="a" style="left:1213px;top:663.0px;width:80.5px;text-align:right;font-size:10.4px;line-height:14px;color:#999;white-space:nowrap;letter-spacing:-0.3px">2020-04-20</div>
<div class="a" style="left:1063px;top:687.0px;font-size:9.7px;line-height:14px;color:#999;white-space:nowrap">发起人：张三</div>
<div class="a" style="left:1117.5px;top:687.0px;width:80px;text-align:right;font-size:10px;line-height:14px;color:#999;white-space:nowrap;letter-spacing:-0.3px">超期4天</div>
<div class="a" style="left:1206.5px;top:691.0px;width:90px;height:6px;border-radius:3px;background:#e8ebf2"></div>
<div class="a" style="left:1206.5px;top:691.0px;width:24.4px;height:6px;border-radius:3px;background:#f0606b"></div>
<div class="a" style="left:1055px;top:501.4px;width:252px;height:1px;background:#ececec"></div>
<div class="a" style="left:1055px;top:575.0px;width:252px;height:1px;background:#ececec"></div>
<div class="a" style="left:1055px;top:646.4px;width:252px;height:1px;background:#ececec"></div>
<div class="a" style="left:1055px;top:719.0px;width:252px;height:1px;background:#ececec"></div>
<div class="a" style="left:1135.5px;top:734px;width:83px;height:27.5px;border:1px solid #e3e3e3;border-radius:3px;background:#fff"></div>
<svg class="a" style="left:1150px;top:742px" width="9" height="11" viewBox="0 0 9 11"><path d="M0.5 1.5 H6 M0.5 5.5 H6 M0.5 9.5 H8" stroke="#3a7ff0" stroke-width="1.3"></path></svg>
<div class="a" style="left: 1164px; top: 741px; font-size: 10px; line-height: 14px; color: rgb(58, 127, 240); white-space: nowrap; letter-spacing: -0.23px;">查看更多</div>


<div class="a" style="left:139px;top:800px;width:1210px;height:25px;background:#eff0f1"></div>
<div class="a" style="left:139px;top:800px;width:59px;height:25px;background:#2e7de6"></div>
<div class="a" style="left:156px;top:806px;font-size:10px;line-height:14px;color:#fff;white-space:nowrap">主页 <span style="font-size:13px;margin-left:3px">×</span></div>
<div class="a" style="left:199px;top:800px;width:61.5px;height:25px;background:#e3e3e3"></div>
<div class="a" style="left:209px;top:806px;font-size:10px;line-height:14px;color:#444;white-space:nowrap;letter-spacing:-0.3px">1104系统<span style="font-size:13px;margin-left:2px">×</span></div>
<div class="a" style="left:262px;top:800px;width:62.5px;height:25px;background:#e3e3e3"></div>
<div class="a" style="left:273px;top:806px;font-size:10px;line-height:14px;color:#444;white-space:nowrap;letter-spacing:-0.3px">系统管理<span style="font-size:13px;margin-left:2px">×</span></div>
<div class="a" style="left:326px;top:800px;width:63px;height:25px;background:#e3e3e3"></div>
<div class="a" style="left:337px;top:806px;font-size:10px;line-height:14px;color:#444;white-space:nowrap;letter-spacing:-0.3px">现金统计<span style="font-size:13px;margin-left:2px">×</span></div>
<div class="a" style="left: 604px; top: 806px; font-size: 9px; line-height: 12px; color: rgb(119, 119, 119); white-space: nowrap; letter-spacing: -0.42px;">北京银丰新融科技开发有限公司版权所有 Copyright(C) . All Rights Reserved</div>


<div class="a" style="left:138px;top:0;width:1px;height:165.5px;background:#0b1242"></div>
<div class="a" style="left:138px;top:204px;width:1px;height:621px;background:#0b1242"></div>
<div class="a" style="left:138px;top:165.5px;width:1px;height:38.5px;background:#2f78e6"></div>
<div class="a" style="left:139px;top:0;width:1.5px;height:825px;background:#fdfdfd"></div>
<div class="a" style="left:134px;top:179.5px;width:0;height:0;border-top:5px solid transparent;border-bottom:5px solid transparent;border-right:5.5px solid #fff"></div>
</div>
</body></html>
